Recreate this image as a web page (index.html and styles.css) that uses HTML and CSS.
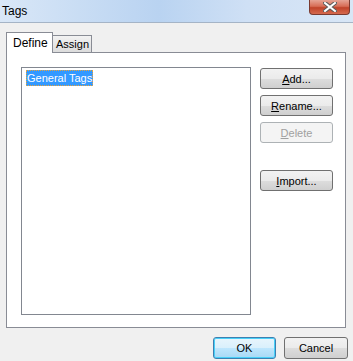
FILE: index.html
```html
<!DOCTYPE HTML>
<html>

<head>
  <meta charset="utf-8" />
  <title>Tags</title>
  <link rel="stylesheet" href="styles.css">
</head>

<body>
  <div class="dialog">
    <div class="title-bar">
      <span class="title-text">Tags</span>
      <div class="close-button">
        <svg width="14" height="10" viewBox="0 0 14 10">
          <path d="M2 1 L12 9 M12 1 L2 9" stroke="#5a5a5a" stroke-width="4" stroke-linecap="square" />
          <path d="M2 1 L12 9 M12 1 L2 9" stroke="#ffffff" stroke-width="2" stroke-linecap="square" />
        </svg>
      </div>
    </div>

    <div class="dialog-body">
      <div class="tab-row">
        <div class="tab tab-active">Define</div>
        <div class="tab">Assign</div>
      </div>

      <div class="tab-panel">
        <div class="tag-list">
          <span class="tag-item tag-selected">General Tags</span>
        </div>
        <div class="side-buttons">
          <button class="win-button"><u>A</u>dd...</button>
          <button class="win-button"><u>R</u>ename...</button>
          <button class="win-button" disabled><u>D</u>elete</button>
          <button class="win-button import-button"><u>I</u>mport...</button>
        </div>
      </div>

      <div class="footer">
        <button class="win-button footer-button default-button">OK</button>
        <button class="win-button footer-button">Cancel</button>
      </div>
    </div>
  </div>
</body>

</html>
```

FILE: styles.css
```css
body {
  margin: 0;
  width: 353px;
  height: 361px;
  overflow: hidden;
  background-color: #f0f0f0;
  font-family: 'Liberation Sans', Arial, sans-serif;
  font-size: 11px;
  color: #000;
}

.dialog {
  display: flex;
  flex-direction: column;
  height: 361px;
}

.title-bar {
  height: 23px;
  display: flex;
  justify-content: space-between;
  align-items: flex-start;
  background: linear-gradient(to right, #d9e7f7 0%, #b9d3f1 45%, #cfe0f5 70%, #d8e6f6 100%);
  border-bottom: 1px solid #a5b4c6;
  box-sizing: border-box;
}

.title-text {
  font-size: 12px;
  padding: 4px 0 0 2px;
}

.close-button {
  width: 41px;
  height: 15px;
  margin-right: 3px;
  box-sizing: border-box;
  border: 1px solid #7a3a30;
  border-top: none;
  border-radius: 0 0 4px 4px;
  background: linear-gradient(to bottom, #e6a495 0%, #d76d56 45%, #c0432a 55%, #d56a4f 100%);
  display: flex;
  justify-content: center;
  align-items: center;
}

.dialog-body {
  flex: 1;
  display: flex;
  flex-direction: column;
  padding: 9px 5px 0 6px;
}

.tab-row {
  display: flex;
  align-items: flex-end;
  height: 20px;
}

.tab {
  height: 17px;
  padding: 0 3px;
  border: 1px solid #898c95;
  border-bottom: none;
  background: linear-gradient(to bottom, #f2f2f2, #dcdcdc);
  line-height: 17px;
  box-sizing: border-box;
  font-size: 11px;
}

.tab-active {
  height: 21px;
  width: 47px;
  margin-bottom: -1px;
  padding: 0 6px;
  background: #fff;
  line-height: 21px;
  font-size: 12px;
  position: relative;
  z-index: 1;
}

.tab-active + .tab {
  border-left: none;
  width: 39px;
}

.tab-panel {
  width: 340px;
  height: 276px;
  box-sizing: border-box;
  background: #fff;
  border: 1px solid #898c95;
  display: flex;
  padding: 14px 0 0 14px;
  gap: 9px;
}

.tag-list {
  width: 230px;
  height: 248px;
  box-sizing: border-box;
  border: 1px solid #828790;
  padding: 2px 4px;
}

.tag-item {
  display: inline-block;
  padding: 1px 1px;
  line-height: 14px;
}

.tag-selected {
  background: #3399ff;
  color: #fff;
  outline: 1px dotted #e8a33a;
  outline-offset: -1px;
}

.side-buttons {
  display: flex;
  flex-direction: column;
  gap: 6px;
  padding-top: 1px;
}

.win-button {
  width: 73px;
  height: 21px;
  padding: 0;
  font-family: 'Liberation Sans', Arial, sans-serif;
  font-size: 11px;
  color: #000;
  border: 1px solid #707070;
  border-radius: 3px;
  background: linear-gradient(to bottom, #f2f2f2 0%, #ebebeb 50%, #dddddd 51%, #cfcfcf 100%);
  box-sizing: border-box;
}

.win-button:disabled {
  color: #a0a0a0;
  border-color: #adb2b5;
  background: #f4f4f4;
}

.import-button {
  margin-top: 21px;
}

.footer {
  display: flex;
  justify-content: flex-end;
  gap: 8px;
  padding-top: 9px;
}

.footer-button {
  width: 64px;
  height: 22px;
}

.default-button {
  width: 63px;
  border-color: #3c7fb1;
  background: linear-gradient(to bottom, #e8f5fc 0%, #d9f0fc 50%, #bee6fd 51%, #a7d9f5 100%);
  box-shadow: inset 0 0 0 1px #48d0f8;
}
```
